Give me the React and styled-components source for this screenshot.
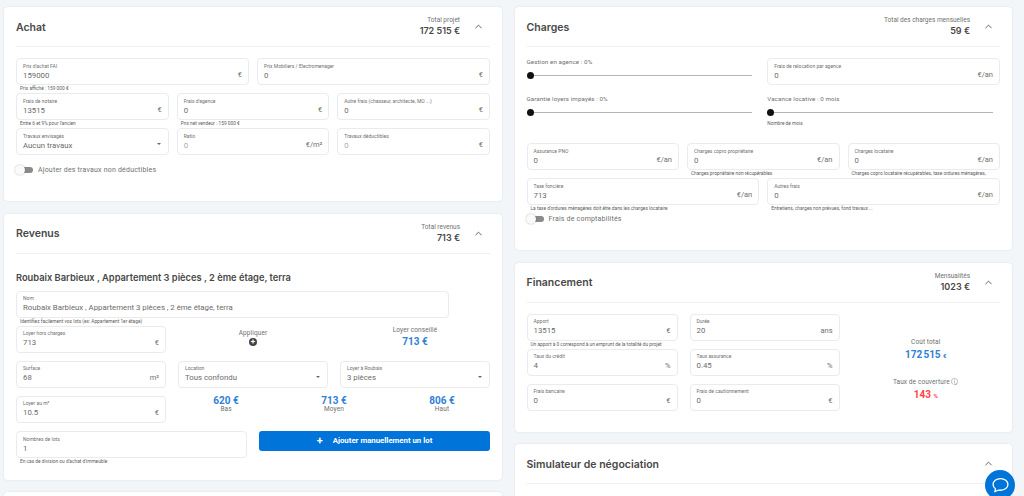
import React from 'react';
import styled, { createGlobalStyle } from 'styled-components';
import { ChevronUp } from 'lucide-react';

const GlobalStyle = createGlobalStyle`
  html, body {
    margin: 0;
    height: 496px;
    overflow: hidden;
    background: #f3f6f9;
    font-family: Roboto, "Liberation Sans", sans-serif;
  }
`;

function CardHeader({ title, totalLabel, total }) {
  return (
    <Header>
      <Title>{title}</Title>
      <TotalBox>
        {totalLabel && <TotalLabel>{totalLabel}</TotalLabel>}
        {total && <TotalValue>{total}</TotalValue>}
      </TotalBox>
      <Chevron><ChevronUp size={11} strokeWidth={2} /></Chevron>
    </Header>
  );
}

function Field({ label, value, unit, hint, disabled, select }) {
  return (
    <FieldWrap>
      <FieldBox>
        <FieldLabel>{label}</FieldLabel>
        <FieldValue $disabled={disabled}>{value}</FieldValue>
        {unit && <FieldUnit>{unit}</FieldUnit>}
        {select && <Caret />}
      </FieldBox>
      <Hint>{hint}</Hint>
    </FieldWrap>
  );
}

function Toggle({ label }) {
  return (
    <ToggleRow>
      <ToggleTrack><ToggleKnob /></ToggleTrack>
      <ToggleLabel>{label}</ToggleLabel>
    </ToggleRow>
  );
}

function SliderField({ label, hint }) {
  return (
    <SliderCell>
      <SliderLabel>{label}</SliderLabel>
      <SliderTrack><SliderThumb /></SliderTrack>
      {hint && <SliderHint>{hint}</SliderHint>}
    </SliderCell>
  );
}

function Stat({ value, label }) {
  return (
    <StatBox>
      <StatValue>{value}</StatValue>
      <StatLabel>{label}</StatLabel>
    </StatBox>
  );
}

export default function App() {
  return (
    <Page>
      <GlobalStyle />
      <Column>
        <Card $height={194}>
          <CardHeader title="Achat" totalLabel="Total projet" total="172 515 €" />
          <Body>
            <Row $cols={2}>
              <Field label="Prix d'achat FAI" value="159000" unit="€" hint="Prix affiché : 159 000 €" />
              <Field label="Prix Mobiliers / Electromenager" value="0" unit="€" />
            </Row>
            <Row $cols={3}>
              <Field label="Frais de notaire" value="13515" unit="€" hint="Entre 6 et 9% pour l'ancien" />
              <Field label="Frais d'agence" value="0" unit="€" hint="Prix net vendeur : 159 000 €" />
              <Field label="Autre frais (chasseur, architecte, MO ...)" value="0" unit="€" />
            </Row>
            <Row $cols={3}>
              <Field label="Travaux envisagés" value="Aucun travaux" select />
              <Field label="Ratio" value="0" unit="€/m²" disabled />
              <Field label="Travaux déductibles" value="0" unit="€" disabled />
            </Row>
            <Toggle label="Ajouter des travaux non déductibles" />
          </Body>
        </Card>

        <Card $height={266}>
          <CardHeader title="Revenus" totalLabel="Total revenus" total="713 €" />
          <Body>
            <LotTitle>Roubaix Barbieux , Appartement 3 pièces , 2 ème étage, terra</LotTitle>
            <NameRow>
              <Field
                label="Nom"
                value="Roubaix Barbieux , Appartement 3 pièces , 2 ème étage, terra"
                hint="Identifiez facilement vos lots (ex: Appartement 1er étage)"
              />
            </NameRow>
            <RentGrid>
              <Field label="Loyer hors charges" value="713" unit="€" />
              <ApplyBox>
                <ApplyLabel>Appliquer</ApplyLabel>
                <PlusDisc>+</PlusDisc>
              </ApplyBox>
              <AdviceBox>
                <ApplyLabel>Loyer conseillé</ApplyLabel>
                <AdviceValue>713 €</AdviceValue>
              </AdviceBox>
              <Field label="Surface" value="68" unit="m²" />
              <Field label="Location" value="Tous confondu" select />
              <Field label="Loyer à Roubaix" value="3 pièces" select />
              <Field label="Loyer au m²" value="10.5" unit="€" />
              <StatsRow>
                <Stat value="620 €" label="Bas" />
                <Stat value="713 €" label="Moyen" />
                <Stat value="806 €" label="Haut" />
              </StatsRow>
            </RentGrid>
            <LotsRow>
              <Field label="Nombres de lots" value="1" hint="En cas de division ou d'achat d'immeuble" />
              <AddButton><span>+</span>Ajouter manuellement un lot</AddButton>
            </LotsRow>
          </Body>
        </Card>

        <Card $height={60} />
      </Column>

      <Column>
        <Card $height={243}>
          <CardHeader title="Charges" totalLabel="Total des charges mensuelles" total="59 €" />
          <Body>
            <Row $cols={2}>
              <SliderField label="Gestion en agence : 0%" />
              <Field label="Frais de relocation par agence" value="0" unit="€/an" />
            </Row>
            <SliderRow>
              <SliderField label="Garantie loyers impayés : 0%" />
              <SliderField label="Vacance locative : 0 mois" hint="Nombre de mois" />
            </SliderRow>
            <Row $cols={3}>
              <Field label="Assurance PNO" value="0" unit="€/an" />
              <Field label="Charges copro propriétaire" value="0" unit="€/an" hint="Charges propriétaire non récupérables" />
              <Field label="Charges locataire" value="0" unit="€/an" hint="Charges copro locataire récupérables, taxe ordures ménagères," />
            </Row>
            <Row $cols={2}>
              <Field label="Taxe foncière" value="713" unit="€/an" hint="La taxe d'ordures ménagères doit être dans les charges locataire" />
              <Field label="Autres frais" value="0" unit="€/an" hint="Entretiens, charges non prévues, fond travaux ..." />
            </Row>
            <CompactToggle>
              <Toggle label="Frais de comptabilités" />
            </CompactToggle>
          </Body>
        </Card>

        <Card $height={169}>
          <CardHeader title="Financement" totalLabel="Mensualités" total="1023 €" />
          <Body>
            <FinanceGrid>
              <Field label="Apport" value="13515" unit="€" hint="Un apport à 0 correspond à un emprunt de la totalité du projet" />
              <Field label="Durée" value="20" unit="ans" />
              <CostColumn>
                <CostLabel>Coût total</CostLabel>
                <CostValue>172&#8239;515 <small>€</small></CostValue>
                <CostLabel $spaced>Taux de couverture ⓘ</CostLabel>
                <CostValue $red>143 <small>%</small></CostValue>
              </CostColumn>
              <Field label="Taux du crédit" value="4" unit="%" />
              <Field label="Taux assurance" value="0.45" unit="%" />
              <Field label="Frais bancaire" value="0" unit="€" />
              <Field label="Frais de cautionnement" value="0" unit="€" />
            </FinanceGrid>
          </Body>
        </Card>

        <Card $height={80}>
          <CardHeader title="Simulateur de négociation" />
        </Card>
      </Column>

      <ChatBubble>
        <svg width="17" height="16" viewBox="0 0 24 22" fill="none" stroke="#fff" strokeWidth="1.8" strokeLinejoin="round">
          <path d="M12 2c6 0 10.5 3.6 10.5 8.2S18 18.4 12 18.4c-1 0-2-.1-2.900-.3L4 20.500l1-4.300C2.900 14.700 1.500 12.600 1.500 10.200 1.500 5.600 6 2 12 2z" />
        </svg>
      </ChatBubble>
    </Page>
  );
}

const Page = styled.div`
  display: grid;
  grid-template-columns: 498px 497.5px;
  column-gap: 12.5px;
  padding: 7px 0 0 4px;
  height: 489px;
  overflow: hidden;
`;

const Column = styled.div`
  display: flex;
  flex-direction: column;
  gap: 12.5px;
`;

const Card = styled.section`
  flex: none;
  height: ${p => p.$height}px;
  box-sizing: border-box;
  padding: 0 12px;
  background: #fff;
  border-radius: 4px;
  box-shadow: 0 0 2px rgba(60, 80, 110, 0.16);
`;

const Header = styled.header`
  display: flex;
  align-items: center;
  height: 39px;
  border-bottom: 1px solid #eef0f2;
  color: #3f4254;
`;

const Title = styled.h2`
  flex: 1;
  margin: 0;
  padding-top: 1px;
  font-family: Inter, sans-serif;
  font-size: 10.5px;
  font-weight: 600;
  color: #484848;
`;

const TotalBox = styled.div`
  text-align: right;
`;

const TotalLabel = styled.div`
  font-size: 6.5px;
  line-height: 9px;
  color: #707070;
`;

const TotalValue = styled.div`
  font-family: Inter, sans-serif;
  font-size: 9px;
  line-height: 12px;
  font-weight: 600;
  color: #484848;
`;

const Chevron = styled.div`
  display: flex;
  justify-content: center;
  width: 36px;
  margin-right: -6px;
  color: #555;
`;

const Body = styled.div`
  padding-top: 11px;
`;

const Row = styled.div`
  display: grid;
  grid-template-columns: repeat(${p => p.$cols}, 1fr);
  column-gap: 8px;
`;

const SliderRow = styled(Row).attrs({ $cols: 2 })`
  height: 48px;
  padding-top: 2px;
`;

const FieldWrap = styled.div`
  min-width: 0;
`;

const FieldBox = styled.div`
  position: relative;
  box-sizing: border-box;
  height: 27px;
  padding: 3.5px 6px 0;
  background: #fff;
  border: 1px solid #e9ebee;
  border-radius: 4px;
`;

const FieldLabel = styled.div`
  font-size: 5px;
  line-height: 6px;
  color: #707070;
  white-space: nowrap;
`;

const FieldValue = styled.div`
  margin-top: 1px;
  font-size: 7.8px;
  line-height: 11px;
  color: ${p => (p.$disabled ? '#aaa' : '#6b6b6b')};
  white-space: nowrap;
`;

const FieldUnit = styled.span`
  position: absolute;
  right: 6px;
  bottom: 5px;
  font-size: 7.5px;
  line-height: 9px;
  color: #707070;
`;

const Caret = styled.span`
  position: absolute;
  right: 7px;
  bottom: 9px;
  border-left: 2.5px solid transparent;
  border-right: 2.5px solid transparent;
  border-top: 2.5px solid #666;
`;

const Hint = styled.div`
  height: 8px;
  padding-left: 4px;
  font-size: 4.8px;
  line-height: 8px;
  color: #5c5c5c;
  white-space: nowrap;
`;

const ToggleRow = styled.div`
  display: flex;
  align-items: center;
  gap: 5px;
  margin-top: 3px;
`;

const ToggleTrack = styled.div`
  position: relative;
  width: 17px;
  height: 6px;
  border-radius: 3px;
  background: #8a8a8a;
`;

const ToggleKnob = styled.div`
  position: absolute;
  left: -1px;
  top: -2px;
  width: 10px;
  height: 10px;
  border-radius: 50%;
  background: #fafafa;
  box-shadow: 0 0 2px rgba(0, 0, 0, 0.3);
`;

const ToggleLabel = styled.span`
  font-size: 7px;
  letter-spacing: 0.2px;
  color: #707070;
`;

const CompactToggle = styled.div`
  margin-top: 1.5px;

  ${ToggleRow} {
    margin-top: 0;
  }
`;

const SliderCell = styled.div`
  padding-right: 7px;
`;

const SliderLabel = styled.div`
  font-size: 6.2px;
  line-height: 8px;
  letter-spacing: 0.1px;
  color: #707070;
`;

const SliderTrack = styled.div`
  position: relative;
  height: 1px;
  margin-top: 9px;
  background: #b5b5b5;
`;

const SliderThumb = styled.div`
  position: absolute;
  left: 0;
  top: -3px;
  width: 7px;
  height: 7px;
  border-radius: 50%;
  background: #111;
`;

const SliderHint = styled.div`
  margin-top: 8px;
  font-size: 4.8px;
  line-height: 6px;
  color: #5c5c5c;
`;

const LotTitle = styled.h3`
  margin: 7.5px 0 6.5px;
  font-family: Inter, sans-serif;
  font-size: 9.3px;
  line-height: 12px;
  font-weight: 600;
  color: #484848;
  white-space: nowrap;
`;

const NameRow = styled.div`
  width: 433px;
`;

const RentGrid = styled.div`
  display: grid;
  grid-template-columns: repeat(3, 150px);
  column-gap: 12px;
`;

const ApplyBox = styled.div`
  display: flex;
  flex-direction: column;
  align-items: center;
  padding-top: 3px;
`;

const AdviceBox = styled(ApplyBox)`
  padding-top: 0;
`;

const ApplyLabel = styled.div`
  font-size: 6.5px;
  line-height: 8px;
  letter-spacing: 0.1px;
  color: #707070;
`;

const PlusDisc = styled.div`
  display: flex;
  align-items: center;
  justify-content: center;
  width: 8px;
  height: 8px;
  margin-top: 1px;
  border-radius: 50%;
  background: #444;
  color: #fff;
  font-size: 8px;
  font-weight: 700;
  line-height: 8px;
`;

const StatsRow = styled.div`
  grid-column: span 2;
  display: grid;
  grid-template-columns: repeat(3, 1fr);
  column-gap: 12px;
`;

const StatBox = styled.div`
  margin-top: -2px;
  text-align: center;
`;

const StatValue = styled.div`
  font-size: 10px;
  line-height: 14px;
  font-weight: 700;
  color: #2f80d8;
`;

const AdviceValue = styled(StatValue)`
  margin-top: 1.5px;
`;

const StatLabel = styled.div`
  margin-top: -2.5px;
  font-size: 6.5px;
  line-height: 8px;
  letter-spacing: 0.1px;
  color: #707070;
`;

const LotsRow = styled.div`
  display: grid;
  grid-template-columns: 231px 231px;
  column-gap: 12px;
  align-items: start;
  margin-top: 0.5px;
`;

const AddButton = styled.button`
  display: flex;
  align-items: center;
  justify-content: center;
  gap: 10px;
  height: 19.5px;
  padding: 0;
  border: 0;
  border-radius: 3px;
  background: #0074d9;
  color: #fff;
  font-family: Roboto, sans-serif;
  font-size: 7.8px;
  font-weight: 700;

  span {
    font-size: 11px;
    line-height: 11px;
  }
`;

const FinanceGrid = styled.div`
  display: grid;
  grid-template-columns: 151px 150px 1fr;
  grid-template-rows: repeat(3, 35px);
  column-gap: 12px;
`;

const CostColumn = styled.div`
  grid-column: 3;
  grid-row: 1 / span 3;
  display: flex;
  flex-direction: column;
  align-items: center;
  justify-content: center;
  padding: 7px 0 0;
`;

const CostLabel = styled.div`
  margin-top: ${p => (p.$spaced ? '16px' : '0')};
  font-size: 6.5px;
  line-height: 8px;
  letter-spacing: 0.1px;
  color: #707070;
`;

const CostValue = styled.div`
  margin-top: 2px;
  font-size: 10px;
  line-height: 13px;
  font-weight: 700;
  color: ${p => (p.$red ? '#f44' : '#2f80d8')};

  small {
    font-size: 6px;
  }
`;

const ChatBubble = styled.div`
  position: fixed;
  left: 985px;
  top: 470px;
  display: flex;
  align-items: center;
  justify-content: center;
  width: 30px;
  height: 30px;
  border-radius: 50%;
  background: #0074d9;
`;
